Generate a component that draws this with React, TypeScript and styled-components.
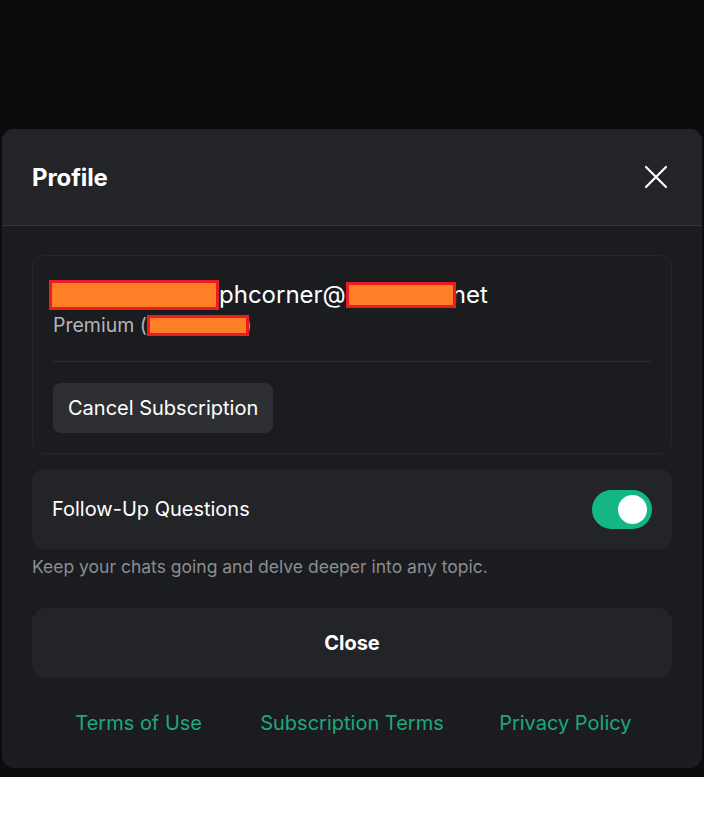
import React, { useState } from 'react';
import styled, { createGlobalStyle } from 'styled-components';

const GlobalStyle = createGlobalStyle`
  html, body {
    margin: 0;
    padding: 0;
    background: #ffffff;
  }
  * {
    box-sizing: border-box;
  }
`;

const Backdrop = styled.div`
  height: 777px;
  background: #0c0c0d;
  padding: 129px 2px 0;
  font-family: Inter, 'Noto Sans', sans-serif;
`;

const Modal = styled.div`
  height: 639px;
  background: #1b1c1f;
  border-radius: 12px;
  overflow: hidden;
  display: flex;
  flex-direction: column;
`;

const Header = styled.div`
  height: 97px;
  flex-shrink: 0;
  background: #232428;
  border-bottom: 1px solid #34353a;
  display: flex;
  align-items: center;
  justify-content: space-between;
  padding: 0 30px 0 30px;
`;

const Title = styled.h2`
  margin: 0;
  color: #ffffff;
  font-size: 24px;
  font-weight: 700;
  letter-spacing: -0.1px;
`;

const IconButton = styled.button`
  width: 32px;
  height: 32px;
  border: none;
  background: transparent;
  padding: 0;
  display: flex;
  align-items: center;
  justify-content: center;
  cursor: pointer;
  color: #ffffff;
`;

const Body = styled.div`
  padding: 29px 30px 0;
  display: flex;
  flex-direction: column;
`;

const AccountCard = styled.div`
  border: 1px solid #26272b;
  border-radius: 12px;
  padding: 24px 20px 20px;
`;

const Email = styled.div`
  color: #ffffff;
  font-size: 24px;
  line-height: 30px;
  white-space: nowrap;
  display: flex;
  align-items: center;
`;

const Plan = styled.div`
  color: #b4b4b8;
  font-size: 19.5px;
  line-height: 26px;
  margin-top: 2px;
  display: flex;
  align-items: center;
`;

const Redacted = styled.span<{ $w: number; $h: number; $left?: number; $overlap?: number }>`
  display: inline-block;
  width: ${p => p.$w}px;
  height: ${p => p.$h}px;
  background: #ff7f27;
  border: 3px solid #ed1c24;
  position: relative;
  z-index: 1;
  margin-left: ${p => (p.$left ? -p.$left : 0)}px;
  margin-right: ${p => (p.$overlap ? -p.$overlap : 0)}px;
`;

const Divider = styled.div`
  height: 1px;
  background: #2c2d31;
  margin: 23px 0 21px;
`;

const SecondaryButton = styled.button`
  height: 50px;
  padding: 0 15px;
  border: none;
  border-radius: 8px;
  background: #2e2f33;
  color: #ffffff;
  font-family: inherit;
  font-size: 20px;
  cursor: pointer;
`;

const SettingRow = styled.div`
  margin-top: 15px;
  height: 80px;
  background: #232428;
  border-radius: 12px;
  display: flex;
  align-items: center;
  justify-content: space-between;
  padding: 0 20px;
`;

const SettingLabel = styled.span`
  color: #ffffff;
  font-size: 20px;
`;

const Toggle = styled.button<{ $on: boolean }>`
  width: 60px;
  height: 39px;
  border: none;
  border-radius: 20px;
  padding: 0 5px;
  background: ${p => (p.$on ? '#13b783' : '#3a3b40')};
  display: flex;
  align-items: center;
  justify-content: ${p => (p.$on ? 'flex-end' : 'flex-start')};
  cursor: pointer;
`;

const Knob = styled.span`
  width: 29px;
  height: 29px;
  border-radius: 50%;
  background: #ffffff;
`;

const Hint = styled.p`
  margin: 8px 0 0;
  color: #8c8c90;
  font-size: 17.5px;
  line-height: 20px;
`;

const PrimaryButton = styled.button`
  margin-top: 31px;
  height: 70px;
  border: none;
  border-radius: 14px;
  background: #232428;
  color: #ffffff;
  font-family: inherit;
  font-size: 20px;
  font-weight: 700;
  cursor: pointer;
`;

const Links = styled.nav`
  display: grid;
  grid-template-columns: repeat(3, 1fr);
  margin-top: 33px;
`;

const FooterLink = styled.a`
  text-align: center;
  color: #1fa77b;
  font-size: 20px;
  text-decoration: none;
  cursor: pointer;
`;

const CloseIcon = () => (
  <svg width="24" height="24" viewBox="0 0 24 24" fill="none" stroke="currentColor" strokeWidth="2.2" strokeLinecap="round">
    <path d="M2 2 L22 22 M22 2 L2 22" />
  </svg>
);

export default function App() {
  const [followUps, setFollowUps] = useState(true);

  return (
    <>
      <GlobalStyle />
      <Backdrop>
        <Modal>
          <Header>
            <Title>Profile</Title>
            <IconButton aria-label="Close">
              <CloseIcon />
            </IconButton>
          </Header>
          <Body>
            <AccountCard>
              <Email>
                <Redacted $w={170} $h={30} $left={4} />
                phcorner@
                <Redacted $w={110} $h={26} $overlap={4} />
                net
              </Email>
              <Plan>
                Premium (
                <Redacted $w={102} $h={21} $overlap={4} />
                )
              </Plan>
              <Divider />
              <SecondaryButton>Cancel Subscription</SecondaryButton>
            </AccountCard>

            <SettingRow>
              <SettingLabel>Follow-Up Questions</SettingLabel>
              <Toggle $on={followUps} onClick={() => setFollowUps(v => !v)}>
                <Knob />
              </Toggle>
            </SettingRow>
            <Hint>Keep your chats going and delve deeper into any topic.</Hint>

            <PrimaryButton>Close</PrimaryButton>

            <Links>
              <FooterLink>Terms of Use</FooterLink>
              <FooterLink>Subscription Terms</FooterLink>
              <FooterLink>Privacy Policy</FooterLink>
            </Links>
          </Body>
        </Modal>
      </Backdrop>
    </>
  );
}
